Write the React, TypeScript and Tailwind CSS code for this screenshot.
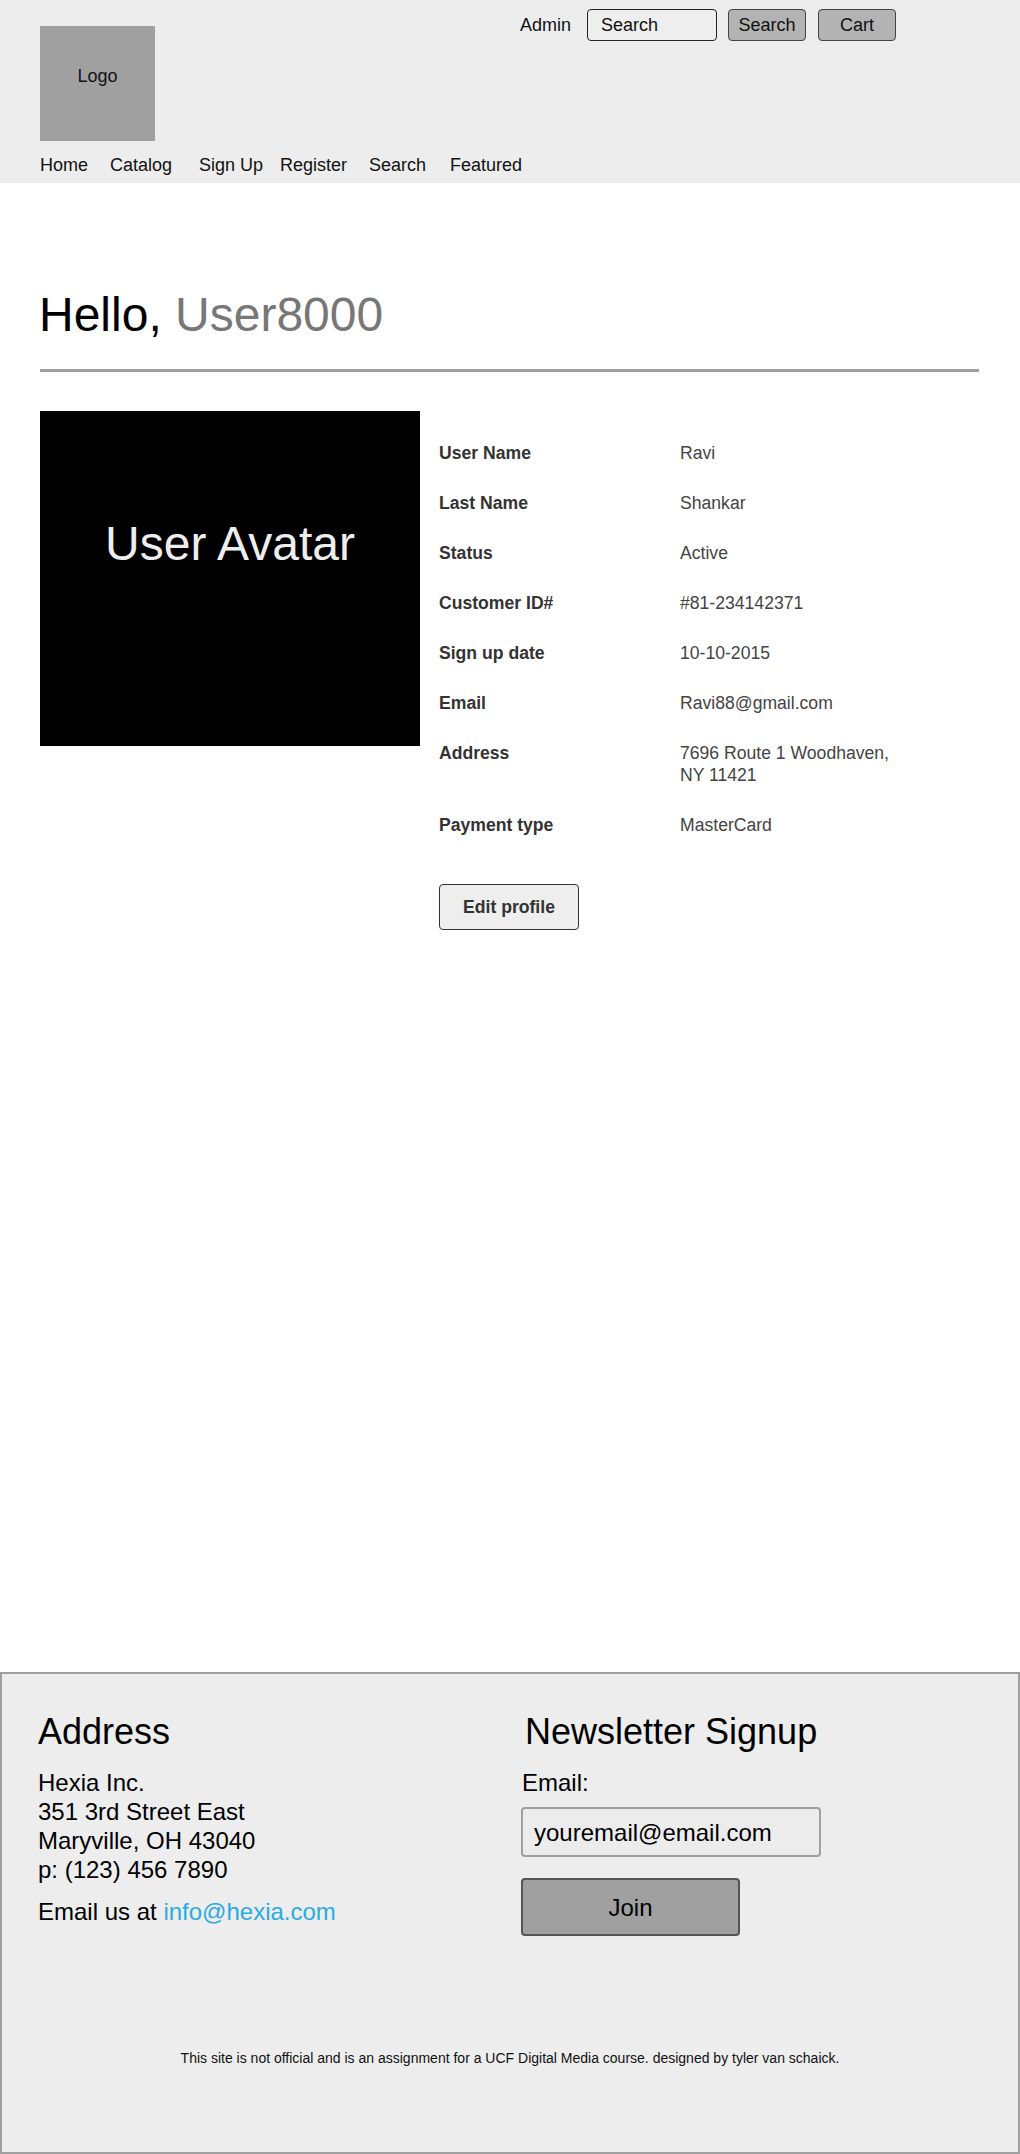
import React from "react";

const FONT = { fontFamily: '"Liberation Sans", Arial, Helvetica, sans-serif' };

const NAV = [
  { label: "Home", w: "w-[70px]" },
  { label: "Catalog", w: "w-[89px]" },
  { label: "Sign Up", w: "w-[81px]" },
  { label: "Register", w: "w-[89px]" },
  { label: "Search", w: "w-[81px]" },
  { label: "Featured", w: "w-auto" },
];

const DETAILS: { label: string; value: React.ReactNode }[] = [
  { label: "User Name", value: "Ravi" },
  { label: "Last Name", value: "Shankar" },
  { label: "Status", value: "Active" },
  { label: "Customer ID#", value: "#81-234142371" },
  { label: "Sign up date", value: "10-10-2015" },
  { label: "Email", value: "Ravi88@gmail.com" },
  {
    label: "Address",
    value: (
      <>
        7696 Route 1 Woodhaven,
        <br />
        NY 11421
      </>
    ),
  },
  { label: "Payment type", value: "MasterCard" },
];

function Header() {
  return (
    <header className="bg-[#ededed] px-[40px] pb-[7px]">
      <div className="flex items-start justify-between">
        <div className="mt-[26px] flex h-[115px] w-[115px] justify-center bg-[#a0a0a0] pt-[39px] text-[18px] leading-[22px] text-[#111]">
          Logo
        </div>
        <div className="mr-[84px] mt-[9px] flex items-center text-[18px] leading-[22px] text-[#111]">
          <span>Admin</span>
          <div className="ml-[16px] flex h-[32px] w-[130px] items-center rounded-[4px] border border-[#222] bg-[#eeeeee] pl-[13px]">
            Search
          </div>
          <button className="ml-[11px] h-[32px] w-[78px] rounded-[4px] border border-[#444] bg-[#b3b3b3]">
            Search
          </button>
          <button className="ml-[12px] h-[32px] w-[78px] rounded-[4px] border border-[#444] bg-[#b3b3b3]">
            Cart
          </button>
        </div>
      </div>
      <nav className="mt-[13px] flex text-[18px] leading-[22px] text-[#111]">
        {NAV.map((n) => (
          <span key={n.label} className={n.w}>
            {n.label}
          </span>
        ))}
      </nav>
    </header>
  );
}

function Profile() {
  return (
    <main className="flex-1 px-[40px] pt-[108px]">
      <h1 className="-ml-[1px] text-[48px] leading-[48px] text-black">
        Hello, <span className="text-[#777777]">User8000</span>
      </h1>
      <div className="mt-[30px] h-[3px] w-[939px] bg-[#a0a0a0]" />

      <div className="mt-[39px] flex">
        <div className="flex h-[335px] w-[380px] justify-center bg-black pt-[109px] text-[48px] leading-[48px] text-[#eeeeee]">
          User Avatar
        </div>

        <div className="ml-[19px] pt-[31px] text-[17.6px] leading-[22px]">
          <div className="flex flex-col gap-[28px]">
            {DETAILS.map((d) => (
              <div key={d.label} className="flex">
                <div className="w-[241px] font-bold text-[#333333]">{d.label}</div>
                <div className="text-[#444444]">{d.value}</div>
              </div>
            ))}
          </div>
          <button className="mt-[48px] h-[46px] w-[140px] rounded-[4px] border border-[#333] bg-[#eeeeee] font-bold text-[#333333]">
            Edit profile
          </button>
        </div>
      </div>
    </main>
  );
}

function Footer() {
  return (
    <footer className="flex h-[482px] flex-col border-2 border-[#a0a0a0] bg-[#ededed] text-black">
      <div className="grid grid-cols-[483px_1fr] pl-[36px] pt-[40px]">
        <div>
          <h2 className="text-[36px] leading-[36px]">Address</h2>
          <div className="mt-[18px] text-[24px] leading-[29px]">
            <p>Hexia Inc.</p>
            <p>351 3rd Street East</p>
            <p>Maryville, OH 43040</p>
            <p>p: (123) 456 7890</p>
            <p className="mt-[13px]">
              Email us at <span className="text-[#29abe2]">info@hexia.com</span>
            </p>
          </div>
        </div>
        <div>
          <h2 className="ml-[4px] text-[36px] leading-[36px]">Newsletter Signup</h2>
          <div className="mt-[18px] text-[24px] leading-[29px]">
            <p className="ml-[1px]">Email:</p>
            <div className="mt-[10px] flex h-[50px] w-[300px] items-center rounded-[4px] border-2 border-[#a0a0a0] bg-[#ececec] pl-[11px]">
              youremail@email.com
            </div>
            <button className="mt-[21px] h-[58px] w-[219px] rounded-[4px] border-2 border-[#555] bg-[#a0a0a0]">
              Join
            </button>
          </div>
        </div>
      </div>
      <p className="mt-[114px] text-center text-[14px] leading-[16px] text-[#111]">
        This site is not official and is an assignment for a UCF Digital Media course. designed by tyler van schaick.
      </p>
    </footer>
  );
}

export default function App() {
  return (
    <div className="flex min-h-screen flex-col bg-white" style={FONT}>
      <Header />
      <Profile />
      <Footer />
    </div>
  );
}
